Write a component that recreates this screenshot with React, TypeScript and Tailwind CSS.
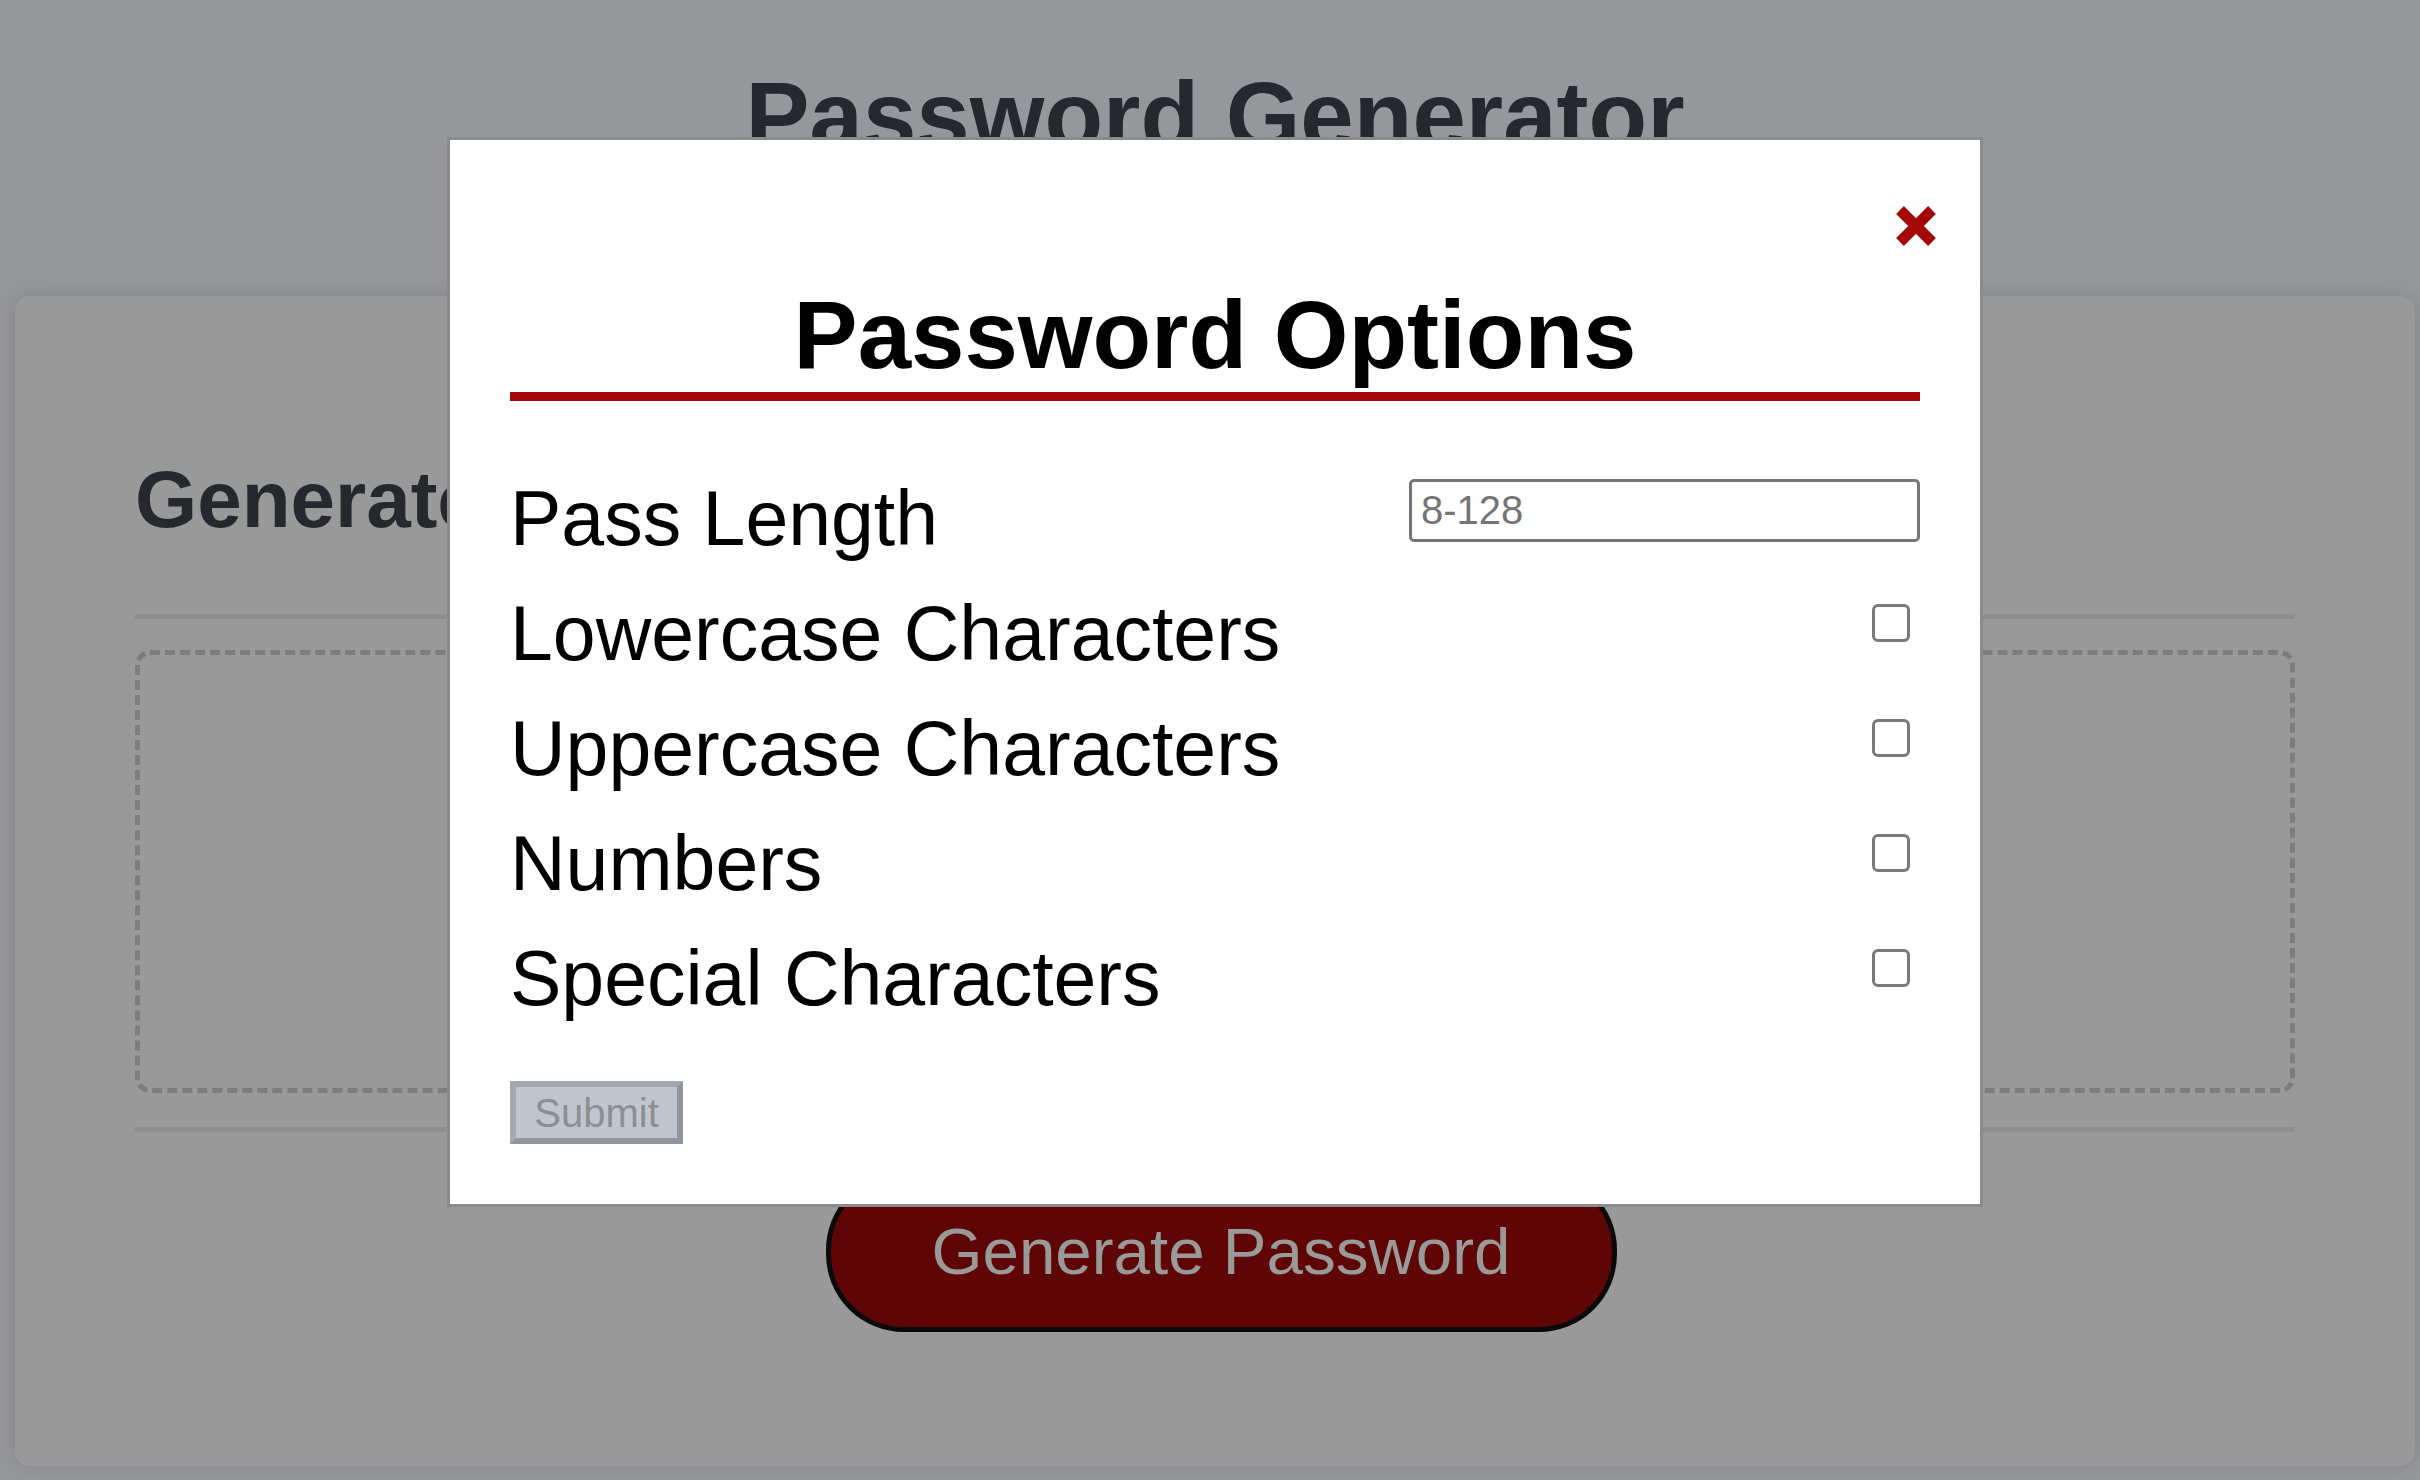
const rows = [
  "Lowercase Characters",
  "Uppercase Characters",
  "Numbers",
  "Special Characters",
];

const CloseIcon = () => (
  <svg width="40" height="40" viewBox="0 0 40 40" aria-hidden="true">
    <path d="M4 4 L36 36 M36 4 L4 36" stroke="#a50606" strokeWidth="11" strokeLinecap="butt" />
  </svg>
);

const OptionsModal = () => {
  return (
    <div className="fixed inset-0 flex justify-center pl-[10px] pt-[137px]">
      <div className="w-[1536px] h-fit border-[3px] border-[#8b8b8b] bg-white px-[60px] pt-[66px] pb-[60px]">
        {/* Close */}
        <div className="flex justify-end -mr-[16px]">
          <button type="button" className="h-[40px] w-[40px]">
            <CloseIcon />
          </button>
        </div>

        <h1 className="mt-[31px] border-b-[9px] border-[#a50808] text-center text-[96px] font-bold leading-[1.2] text-black">
          Password Options
        </h1>

        {/* Options */}
        <div className="mt-[60px]">
          <div className="flex h-[115px] items-start justify-between">
            <label className="text-[77px] leading-[115px] text-black">Pass Length</label>
            <input
              type="text"
              placeholder="8-128"
              className="mt-[18px] h-[63px] w-[511px] rounded-[5px] border-[3px] border-[#767676] bg-white pl-[9px] text-[40px] text-black placeholder:text-[#757575] outline-none"
            />
          </div>
          {rows.map((r) => (
            <div key={r} className="flex h-[115px] items-start justify-between">
              <label className="text-[77px] leading-[115px] text-black">{r}</label>
              <input
                type="checkbox"
                className="mt-[28px] mr-[10px] h-[38px] w-[38px] appearance-none rounded-[6px] border-[3px] border-[#7a7a7a] bg-white"
              />
            </div>
          ))}
        </div>

        <button
          type="button"
          disabled
          className="mt-[45px] flex h-[63px] w-[173px] items-center justify-center border-[6px] border-t-[#a5a8ad] border-l-[#a5a8ad] border-b-[#919499] border-r-[#919499] bg-[#c0c6cf] text-[40px] text-[#8c8e93]"
        >
          Submit
        </button>
      </div>
    </div>
  );
};

export default function App() {
  return (
    <div className="min-h-screen bg-[#96979a] pl-[10px] font-['Liberation_Sans',Arial,sans-serif]">
      <header className="pt-[58px] text-center">
        <h1 className="text-[96px] font-bold leading-[1.2] text-[#23292f]">Password Generator</h1>
      </header>

      {/* Card */}
      <main className="mx-[5px] mt-[123px] rounded-[15px] bg-[#999999] px-[120px] pt-[156px] pb-[134px] shadow-[0_0_22px_rgba(0,0,0,0.12)]">
        <h2 className="text-[80px] font-bold leading-[1.2] text-[#25292e]">Generate a Password</h2>
        <div className="mt-[66px] h-[5px] bg-[#8d8d8d]" />
        <textarea
          readOnly
          placeholder="Your Secure Password"
          className="mt-[31px] block h-[443px] w-full resize-none rounded-[15px] border-[5px] border-dashed border-[#7c7d81] bg-transparent pt-[170px] text-center text-[60px] placeholder:text-[#7a7b7e] outline-none"
        />
        <div className="mt-[34px] h-[5px] bg-[#8d8d8d]" />
        <div className="mt-[40px] flex justify-center pl-[12px]">
          <button
            type="button"
            className="flex h-[160px] w-[791px] items-center justify-center rounded-[78px] border-[5px] border-[#0a0a0a] bg-[#600505] text-[65.5px] text-[#999999]"
          >
            Generate Password
          </button>
        </div>
      </main>

      <OptionsModal />
    </div>
  );
}
